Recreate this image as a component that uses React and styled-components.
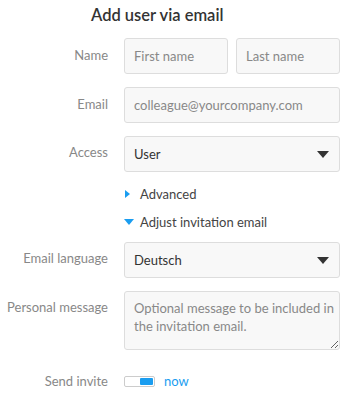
import React, { useState } from "react"
import styled, { createGlobalStyle } from "styled-components"

const GlobalStyle = createGlobalStyle`
  html, body {
    margin: 0;
    padding: 0;
    background: #fff;
    font-family: Lato, "Open Sans", "Liberation Sans", sans-serif;
    color: #555;
  }
  * { box-sizing: border-box; }
`

const StyledForm = styled.form`
  width: 345px;
  padding: 4px 5px 0 0;
`

const StyledTitle = styled.h2`
  margin: 0 0 12px 91px;
  font-size: 16.5px;
  font-weight: 600;
  color: #333;
  line-height: 22px;
`

const StyledRow = styled.div`
  display: grid;
  grid-template-columns: 108px 1fr;
  column-gap: 16px;
  align-items: start;
  margin-bottom: ${props => props.gap ?? 13}px;
`

const StyledLabel = styled.label`
  text-align: right;
  font-size: 13px;
  color: #888;
  line-height: 18px;
  padding-top: ${props => props.top ?? 8}px;
  white-space: nowrap;
`

const StyledPair = styled.div`
  display: grid;
  grid-template-columns: 1fr 1fr;
  column-gap: 8px;
`

const StyledInput = styled.input`
  width: 100%;
  height: 36px;
  padding: 0 9px;
  border: 1px solid #ddd;
  border-radius: 3px;
  background: #f8f8f8;
  font-family: inherit;
  font-size: 13px;
  color: #555;
  outline: none;
  &::placeholder {
    color: #888;
  }
`

const StyledSelectBox = styled.div`
  display: flex;
  align-items: center;
  justify-content: space-between;
  height: 36px;
  padding: 0 9px;
  border: 1px solid #ddd;
  border-radius: 3px;
  background: #f8f8f8;
  font-size: 13px;
  color: #333;
`

const StyledCaret = styled.span`
  width: 0;
  height: 0;
  border-left: 6px solid transparent;
  border-right: 6px solid transparent;
  border-top: 7px solid #333;
  margin-right: 1px;
`

const StyledToggleLine = styled.div`
  display: flex;
  align-items: center;
  height: 28px;
  font-size: 13px;
  color: #444;
  cursor: pointer;
`

const StyledArrow = styled.span`
  width: 0;
  height: 0;
  ${props =>
    props.open
      ? `
    border-left: 5px solid transparent;
    border-right: 5px solid transparent;
    border-top: 6px solid #1a9df0;
    margin-right: 6px;
  `
      : `
    border-top: 4px solid transparent;
    border-bottom: 4px solid transparent;
    border-left: 5px solid #1a9df0;
    margin-left: 1px;
    margin-right: 10px;
  `}
`

const StyledTextArea = styled.textarea`
  width: 100%;
  height: 59px;
  padding: 7px 3px 7px 9px;
  border: 1px solid #ddd;
  border-radius: 3px;
  background: #f8f8f8;
  font-family: inherit;
  font-size: 13px;
  line-height: 18px;
  color: #555;
  resize: vertical;
  outline: none;
  display: block;
  &::placeholder {
    color: #888;
  }
`

const StyledSwitchWrap = styled.div`
  display: flex;
  align-items: center;
  gap: 9px;
  height: 18px;
`

const StyledSwitch = styled.button`
  position: relative;
  width: 31px;
  height: 11px;
  padding: 0;
  border: 1px solid #ccc;
  border-radius: 2px;
  background: #fff;
  cursor: pointer;
  &::after {
    content: "";
    position: absolute;
    top: 1px;
    right: 1px;
    width: 13px;
    height: 7px;
    border-radius: 1px;
    background: #1a9df0;
  }
`

const StyledNow = styled.span`
  font-size: 13px;
  color: #1a9df0;
`

const Select = ({ value }) => (
  <StyledSelectBox>
    <span>{value}</span>
    <StyledCaret />
  </StyledSelectBox>
)

const App = () => {
  const [advanced, setAdvanced] = useState(false)
  const [adjust, setAdjust] = useState(true)

  return (
    <>
      <GlobalStyle />
      <StyledForm onSubmit={e => e.preventDefault()}>
        <StyledTitle>Add user via email</StyledTitle>

        <StyledRow>
          <StyledLabel top={8}>Name</StyledLabel>
          <StyledPair>
            <StyledInput placeholder="First name" />
            <StyledInput placeholder="Last name" />
          </StyledPair>
        </StyledRow>

        <StyledRow>
          <StyledLabel top={8}>Email</StyledLabel>
          <StyledInput placeholder="colleague@yourcompany.com" />
        </StyledRow>

        <StyledRow gap={8}>
          <StyledLabel top={7}>Access</StyledLabel>
          <Select value="User" />
        </StyledRow>

        <StyledRow gap={0}>
          <span />
          <StyledToggleLine onClick={() => setAdvanced(!advanced)}>
            <StyledArrow open={advanced} />
            Advanced
          </StyledToggleLine>
        </StyledRow>

        <StyledRow gap={6}>
          <span />
          <StyledToggleLine onClick={() => setAdjust(!adjust)}>
            <StyledArrow open={adjust} />
            Adjust invitation email
          </StyledToggleLine>
        </StyledRow>

        <StyledRow gap={13}>
          <StyledLabel top={7}>Email language</StyledLabel>
          <Select value="Deutsch" />
        </StyledRow>

        <StyledRow gap={22}>
          <StyledLabel top={7}>Personal message</StyledLabel>
          <StyledTextArea placeholder="Optional message to be included in the invitation email." />
        </StyledRow>

        <StyledRow gap={0}>
          <StyledLabel top={0}>Send invite</StyledLabel>
          <StyledSwitchWrap>
            <StyledSwitch type="button" aria-label="Send invite now" />
            <StyledNow>now</StyledNow>
          </StyledSwitchWrap>
        </StyledRow>
      </StyledForm>
    </>
  )
}

export default App
